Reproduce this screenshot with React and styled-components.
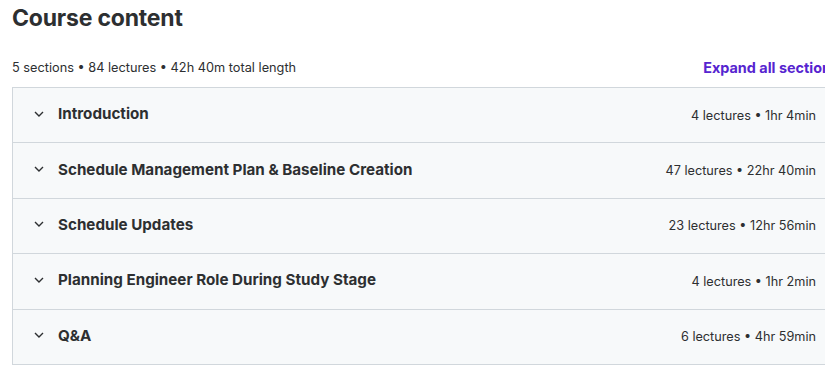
import React from "react";
import styled, { createGlobalStyle } from "styled-components";

const Global = createGlobalStyle`
  html, body { margin: 0; padding: 0; background: #fff; overflow: hidden; }
  body { font-family: "Inter", "Liberation Sans", sans-serif; color: #2d2f31; }
`;

const Page = styled.div`
  padding: 4px 0 0 12px;
  width: 827px;
`;

const Title = styled.h2`
  margin: 0;
  font-size: 23px;
  font-weight: 700;
  line-height: 28px;
  letter-spacing: -0.2px;
  color: #2d2f31;
`;

const MetaBar = styled.div`
  display: flex;
  align-items: center;
  justify-content: space-between;
  margin-top: 24px;
  height: 22px;
  padding-bottom: 9px;
`;

const Meta = styled.span`
  font-size: 12.75px;
  color: #2d2f31;
`;

const Expand = styled.button`
  border: 0;
  background: none;
  padding: 0;
  font-family: inherit;
  font-size: 14.4px;
  font-weight: 700;
  color: #5624d0;
  white-space: nowrap;
  cursor: pointer;
`;

const Box = styled.div`
  border: 1px solid #d1d7dc;
  border-bottom: none;
`;

const Row = styled.div`
  display: flex;
  align-items: center;
  box-sizing: border-box;
  height: 55.4px;
  padding: 0 22px 3px 20px;
  background: #f7f9fa;
  border-bottom: 1px solid #d1d7dc;
`;

const Chevron = styled.svg`
  width: 12px;
  height: 12px;
  margin-right: 13px;
  flex: none;
`;

const SectionTitle = styled.span`
  flex: 1;
  font-size: 15.2px;
  font-weight: 700;
  color: #2d2f31;
`;

const SectionMeta = styled.span`
  font-size: 12.7px;
  color: #2d2f31;
  padding-top: 3px;
`;

const sections = [
  ["Introduction", "4 lectures • 1hr 4min"],
  ["Schedule Management Plan & Baseline Creation", "47 lectures • 22hr 40min"],
  ["Schedule Updates", "23 lectures • 12hr 56min"],
  ["Planning Engineer Role During Study Stage", "4 lectures • 1hr 2min"],
  ["Q&A", "6 lectures • 4hr 59min"],
];

export default function App() {
  return (
    <>
      <Global />
      <Page>
        <Title>Course content</Title>
        <MetaBar>
          <Meta>5 sections • 84 lectures • 42h 40m total length</Meta>
          <Expand>Expand all sections</Expand>
        </MetaBar>
        <Box>
          {sections.map(([t, m]) => (
            <Row key={t}>
              <Chevron viewBox="0 0 12 12">
                <path d="M2 4l4 4 4-4" fill="none" stroke="#2d2f31" strokeWidth="1.4" />
              </Chevron>
              <SectionTitle>{t}</SectionTitle>
              <SectionMeta>{m}</SectionMeta>
            </Row>
          ))}
        </Box>
      </Page>
    </>
  );
}
